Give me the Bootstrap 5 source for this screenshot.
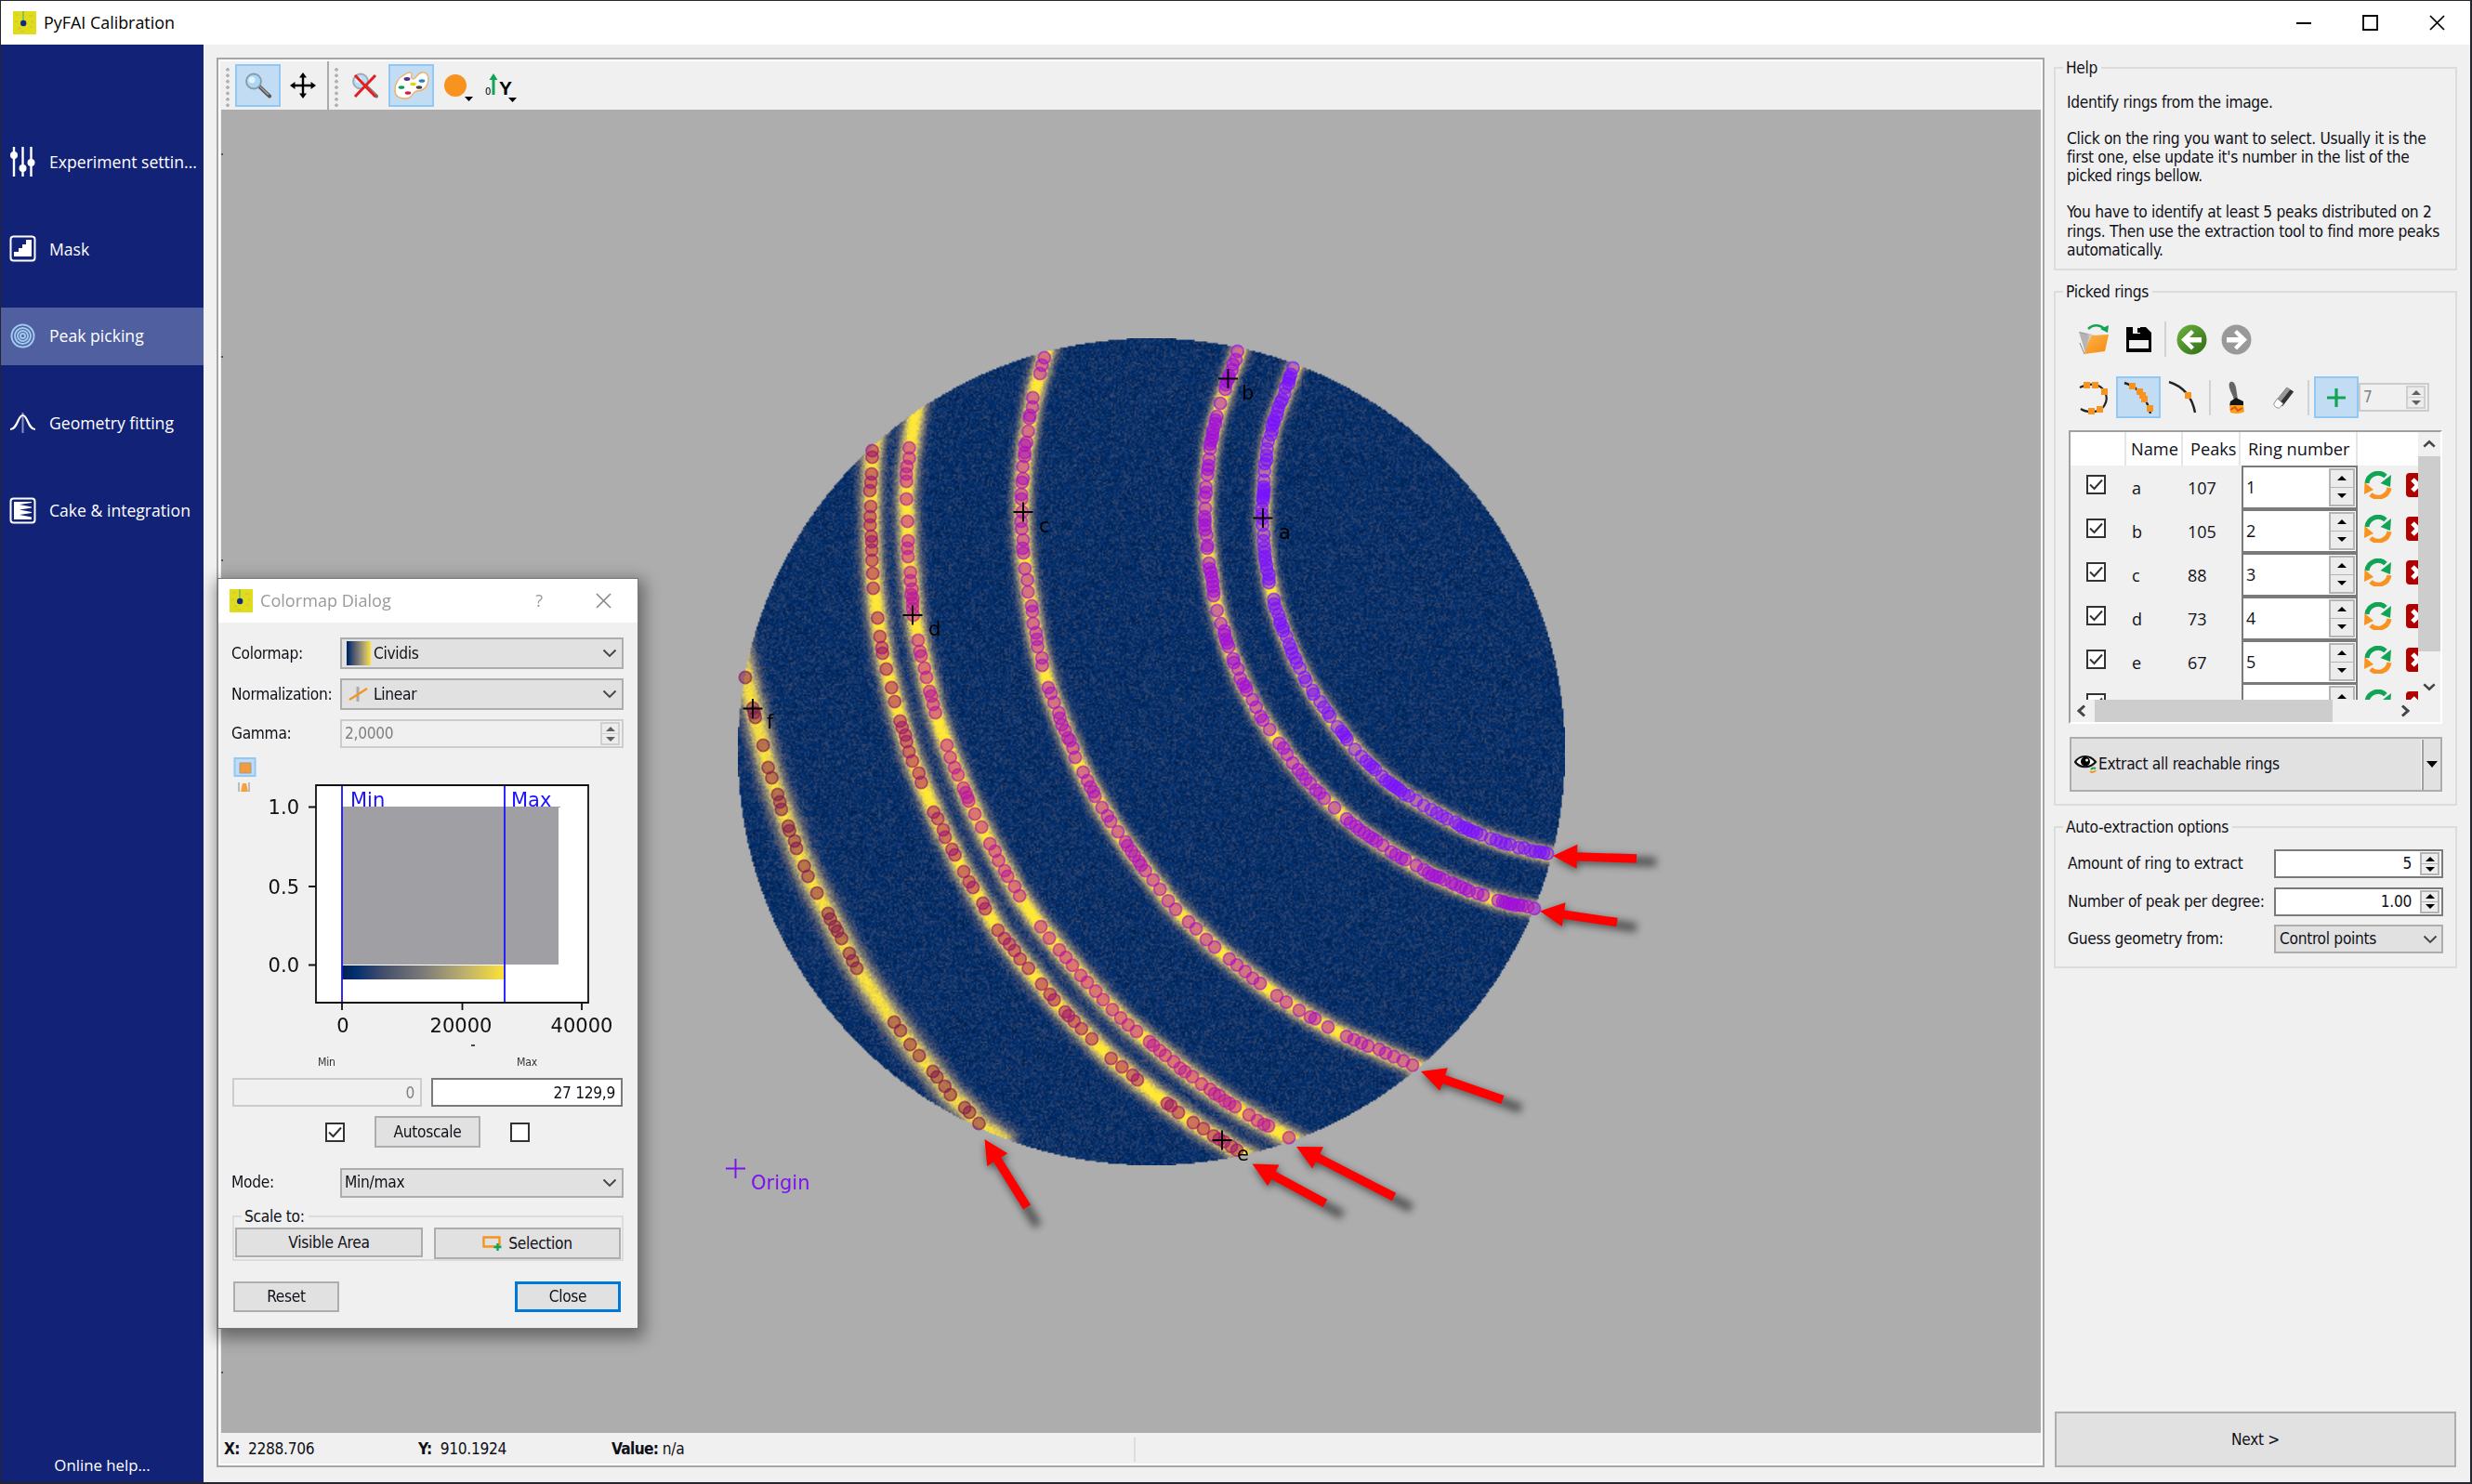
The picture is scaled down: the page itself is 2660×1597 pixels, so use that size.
<!DOCTYPE html>
<html lang="en">
<head>
<meta charset="utf-8">
<title>PyFAI Calibration</title>
<link href="https://cdn.jsdelivr.net/npm/bootstrap@5.3.0/dist/css/bootstrap.min.css" rel="stylesheet">
<style>
html,body{height:1597px;width:2660px;overflow:hidden}
body{font-family:"DejaVu Sans Condensed","DejaVu Sans","Noto Sans",sans-serif;font-stretch:condensed;font-size:17.2px;letter-spacing:-.3px;line-height:20.3px;color:#101018;background:#f0f0f0}
svg{display:block;flex:none}
.win{width:2660px;height:1597px;border:solid #24262c;border-width:1px 2px 2px 1px}
.segoe{font-family:"Open Sans","Noto Sans",sans-serif;font-stretch:normal;letter-spacing:0}
.titlebar{height:47px;background:#fff;padding-left:13px;padding-bottom:1px;font-size:17.9px;color:#000}
.titlebar .ctl{gap:55px;padding-right:27px}
.side{width:218px;background:#112277;color:#fff;font-size:17.6px;padding-top:95px}
.side a{height:62px;margin-bottom:31.8px;padding-left:9px;gap:14px;color:#fff;text-decoration:none;white-space:nowrap}
.side a.active{background:#4f5f9f}
.plotframe{width:1967px;height:1517px;margin:14px 0 0 14px;border:2px solid #a5a5a5;background:#f0f0f0;outline:2px solid #fff;outline-offset:-4px}
.toolstrip{height:54px;padding:5px 0 0 8px}
.tool{width:49px;height:46px;border:2px solid transparent;flex:none}
.tool.on,.ptool.on{background:#c1dcf3;border-color:#90c8f6}
.grip{width:5px;height:42px;background:radial-gradient(circle at 2px 2px,#b0b0b0 1.6px,transparent 2px) 0 0/5px 6.4px}
.vsep{width:2px;height:52px;margin-top:-3px;background:#ababab;flex:none}
.plot{margin-left:3px;width:1958px;height:1424px;background:#adadad;position:relative}
.plot canvas{position:absolute;left:556px;top:246px;width:890px;height:890px}
.plot svg{position:absolute;left:0;top:0}
.status{height:35px;padding-left:6px}
.status b{font-weight:700;letter-spacing:-.7px}
.status span{width:209px;flex:none}
.panel{width:434px;margin:24px 0 0 10px}
.gbox{border:2px solid #dcdcdc;position:relative;margin-bottom:22px}
.gbox>.cap{position:absolute;top:-11px;left:8px;padding:0 4px 0 3px;background:#f0f0f0}
.gbox p{margin:0 0 18.6px}
.ptool{width:48px;height:45px;border:2px solid transparent;flex:none}
.psep{width:2px;height:38px;background:#d2d2d2}
.field{border:2px solid #7a7a7a;background:#fff}
.field.off{border-color:#ccc;background:#f0f0f0;color:#808080}
.combo,.wbtn{border:2px solid #adadad;background:#e1e1e1;color:#101018}
.wbtn.main{border:3px solid #0078d7}
.updn{border:2px solid #b4b4b4;background:#ececec}
.updn i{display:flex;flex:1;align-items:center;justify-content:center;min-height:0}
.updn i+i{border-top:1.5px solid #b4b4b4}
.updn i:before{content:"";border:5px solid transparent;border-top:0;border-bottom:5px solid #000}
.updn i+i:before{border-bottom:0;border-top:5px solid #000}
.off .updn{border-color:#d0d0d0}.off .updn i+i{border-color:#d0d0d0}
.off .updn i:before{border-bottom-color:#606060}.off .updn i+i:before{border-top-color:#606060}
.chk{width:21px;height:21px;border:2px solid #333;background:#fff}
.tbl{width:402px;height:316px;border:2px solid #a0a0a0;border-right-color:#fff;border-bottom-color:#fff}
.tview{width:374px;height:288px;overflow:hidden}
.thead{height:36px;background:#fff;font-size:18.2px}
.thead>div{border-right:2px solid #e5e5e5;flex:none}
.trow{height:46.9px;font-size:18px}
.trow>div{flex:none}
.c0{width:60px;padding-left:16px}.c1{width:61px}.c2{width:62px}.c3{width:125px}
.trow .c1{padding-left:6px}.trow .c2{padding-left:5px}
.vbar{width:24px;height:288px}.hbar{height:24px}
.dlg{position:absolute;left:234px;top:622px;width:453px;height:808px;background:#f0f0f0;border:1.5px solid #777;box-shadow:2px 6px 16px 4px rgba(0,0,0,.4)}
.dlg .dtitle{height:47px;background:#fff;color:#999;font-size:18.1px;padding:0 0 1px 12px}
.frow{padding-left:14px}
.frow>span{width:117px;flex:none}
.tiny{font-size:12.2px;letter-spacing:-.2px;line-height:16px;color:#333}
.dj{font-family:"DejaVu Sans",sans-serif;font-stretch:normal;letter-spacing:0}
</style>
<script src="https://cdn.jsdelivr.net/npm/bootstrap@5.3.0/dist/js/bootstrap.bundle.min.js"></script>
</head>
<body>
<svg width="0" height="0" class="position-absolute">
 <defs>
  <linearGradient id="civ"><stop offset="0" stop-color="#00204d"/><stop offset=".08" stop-color="#002f6f"/><stop offset=".25" stop-color="#434e6c"/><stop offset=".5" stop-color="#7c7b78"/><stop offset=".75" stop-color="#bcaf6f"/><stop offset="1" stop-color="#ffe236"/></linearGradient>
  <linearGradient id="fold" x1="0" y1="0" x2="1" y2="1"><stop offset="0" stop-color="#ffb44d"/><stop offset="1" stop-color="#f28a10"/></linearGradient>
  <linearGradient id="steel" x1="0" y1="0" x2="1" y2="1"><stop offset="0" stop-color="#777"/><stop offset=".5" stop-color="#e4e4e4"/><stop offset="1" stop-color="#777"/></linearGradient>
  <linearGradient id="grn" x1="0" y1="0" x2="1" y2="1"><stop offset="0" stop-color="#6db33f"/><stop offset="1" stop-color="#2f6d14"/></linearGradient>
  <filter id="soft" x="-50%" y="-150%" width="200%" height="400%"><feGaussianBlur stdDeviation="4"/></filter>
  <symbol id="logo" viewBox="0 0 25 25"><rect width="25" height="25" fill="#e0dc1c"/><path d="M3 3h3v2H3zM17 4h4v2h-4zM5 17h3v3H5zM18 16h3v2h-3zM8 21h4v2H8zM2 10h3v2H2zM20 10h2v3h-2z" fill="#cfd030"/><path d="M11 0v13" stroke="#6cc06c" stroke-width="1.6"/><circle cx="11.2" cy="13" r="3.2" fill="#102a80"/></symbol>
  <symbol id="lens" viewBox="0 0 30 28"><path d="M15.500 14.500L27 25.500" stroke="#555" stroke-width="4" stroke-linecap="round"/><path d="M17 15.500L26 24" stroke="#aaa" stroke-width="1.300"/><circle cx="10" cy="9.500" r="8" fill="#a9d8f5" stroke="#8a9aa8" stroke-width="1.800"/><circle cx="8" cy="8" r="3.500" fill="#e2f4ff"/></symbol>
  <symbol id="tick" viewBox="0 0 17 17"><path d="M2 8.500l4.500 4.500L15 3.500" fill="none" stroke="#333" stroke-width="2"/></symbol>
  <symbol id="chev" viewBox="0 0 16 10"><path d="M1.500 1.500L8 8l6.500-6.500" fill="none" stroke="#444" stroke-width="1.900"/></symbol>
  <symbol id="reload" viewBox="0 0 30 30"><path d="M3 13A12 12 0 0 1 23 5.500" fill="none" stroke="#12a455" stroke-width="5"/><path d="M29 4l-1 13-10.500-4z" fill="#12a455"/><path d="M27 18A12 12 0 0 1 7 25" fill="none" stroke="#f7931e" stroke-width="5"/><path d="M0.500 12l-0.500 13 10-5z" fill="#f7931e"/></symbol>
  <symbol id="del" viewBox="0 0 26 26"><rect width="26" height="26" rx="4" fill="#b00000"/><path d="M7 7l12 12M19 7L7 19" stroke="#fff" stroke-width="5"/></symbol>
 </defs>
</svg>

<div class="win d-flex flex-column">
 <header class="titlebar segoe d-flex align-items-center">
  <svg width="25" height="25" class="me-2"><use href="#logo"/></svg><span>PyFAI Calibration</span>
  <div class="ctl d-flex align-items-center ms-auto">
   <svg width="16" height="16"><path d="M0 9h16" stroke="#000" stroke-width="2"/></svg>
   <svg width="17" height="17"><path d="M1 1h15v15H1z" fill="none" stroke="#000" stroke-width="1.800"/></svg>
   <svg width="17" height="17"><path d="M1 1l15 15M16 1L1 16" stroke="#000" stroke-width="1.700"/></svg>
  </div>
 </header>
 <main class="d-flex flex-grow-1">
  <nav class="side segoe d-flex flex-column">
   <a class="d-flex align-items-center"><svg width="29" height="34"><path d="M5 1v32M14.500 1v32M23.500 1v32" stroke="#fff" stroke-width="2.400"/><circle cx="5" cy="10" r="4" fill="#fff"/><circle cx="14.500" cy="24" r="4" fill="#fff"/><circle cx="23.500" cy="18" r="4" fill="#fff"/></svg>Experiment settin...</a>
   <a class="d-flex align-items-center"><svg width="29" height="29"><rect x="1.500" y="1.500" width="26" height="26" rx="3" fill="none" stroke="#fff" stroke-width="2"/><path d="M5 23v-5h5v-4h4v-4h4V5h6v18z" fill="#fff"/></svg>Mask</a>
   <a class="active d-flex align-items-center"><svg width="29" height="29" fill="none" stroke="#9fcbee" stroke-width="2"><circle cx="14.500" cy="14.500" r="12"/><circle cx="14.500" cy="14.500" r="8.500"/><circle cx="14.500" cy="14.500" r="5.500"/><circle cx="14.500" cy="14.500" r="2.500"/></svg>Peak picking</a>
   <a class="d-flex align-items-center"><svg width="29" height="24" fill="none" stroke="#fff"><path d="M14.500 1v22" stroke-width="2" opacity=".5"/><path d="M1 19C9 19 9 4 14.500 4S20 19 28 19" stroke-width="2.200"/></svg>Geometry fitting</a>
   <a class="d-flex align-items-center"><svg width="29" height="29"><rect x="1.500" y="1.500" width="26" height="26" rx="3" fill="none" stroke="#fff" stroke-width="2"/><path d="M5 5h19v1l-13 2 13 2.500v1l-13 2 13 2.500v1l-13 2 13 2.500V24H5z" fill="#fff"/></svg>Cake &amp; integration</a>
   <div class="mt-auto text-center" style="font-size:16.800px;padding-bottom:8px">Online help...</div>
  </nav>

  <section class="plotframe">
   <div class="toolstrip d-flex align-items-start">
    <div class="grip mt-1"></div>
    <div class="tool on d-flex align-items-center justify-content-center" style="margin-left:5px"><svg width="30" height="28"><use href="#lens"/></svg></div>
    <div class="tool d-flex align-items-center justify-content-center" style="margin-left:-1px;margin-right:2px"><svg width="28" height="28" viewBox="0 0 28 28"><path d="M14 4v20M4 14h20" stroke="#000" stroke-width="2.400"/><path d="M14 0l4 5.500h-8zM14 28l4-5.500h-8zM0 14l5.500-4v8zM28 14l-5.500-4v8z"/></svg></div>
    <div class="vsep"></div>
    <div class="grip mt-1" style="margin:0 4px 0 6px"></div>
    <div class="tool d-flex align-items-center justify-content-center"><svg width="32" height="28"><use href="#lens" opacity=".8" width="30" height="28"/><path d="M4 3l22 23M26 3L4 26" stroke="#e41e1e" stroke-width="3"/></svg></div>
    <div class="tool on d-flex align-items-center justify-content-center"><svg width="38" height="32" viewBox="0 0 38 32"><path d="M12 4c3-2 7-3 7 0 0 2-2 4 1 5 4 1 4-6 10-7s8 5 6 12-7 8-12 8c-5 1-3 8-12 8C5 30 1 27 1 21 1 13 6 7 12 4z" fill="#fff" stroke="#f0b060" stroke-width="1.300"/><ellipse cx="14" cy="9" rx="3.400" ry="1.900" fill="#5a2a90"/><ellipse cx="30" cy="11" rx="3.400" ry="1.800" fill="#1f7fd0"/><ellipse cx="20.500" cy="14.500" rx="3.200" ry="1.800" fill="#e5d500"/><ellipse cx="8" cy="18" rx="3.300" ry="1.800" fill="#109a50"/><ellipse cx="27" cy="18" rx="3.300" ry="1.800" fill="#444"/><ellipse cx="15" cy="24" rx="3.300" ry="1.800" fill="#c8205a"/></svg></div>
    <div class="tool d-flex align-items-center justify-content-center"><svg width="36" height="36"><circle cx="16" cy="18" r="12" fill="#f7931e"/><path d="M26 30h9l-4.500 5z"/></svg></div>
    <svg width="36" height="46" style="margin-left:4px"><path d="M11 33V13" stroke="#12a455" stroke-width="3"/><path d="M11 10l4.500 7h-9z" fill="#12a455"/><text x="2" y="33" font-size="10" class="dj">0</text><text x="17" y="33" font-size="21" font-weight="bold" font-family="Liberation Sans, sans-serif">Y</text><path d="M27 36h9l-4.500 5z"/></svg>
   </div>
   <div class="plot">
    <canvas id="img" width="534" height="534"></canvas>
    <svg id="ov" width="1958" height="1424" viewBox="238 119 1958 1424"></svg>
   </div>
   <div class="status d-flex align-items-center">
    <span><b>X:</b>&nbsp; 2288.706</span><span style="width:208px"><b>Y:</b>&nbsp; 910.1924</span><span><b>Value:</b> n/a</span>
    <div style="width:2px;height:26px;background:#dcdcdc;margin-left:353px"></div>
   </div>
  </section>

  <aside class="panel d-flex flex-column">
   <div class="gbox" style="height:219px;padding:26px 0 0 12px"><span class="cap">Help</span>
    <p>Identify rings from the image.</p>
    <p>Click on the ring you want to select. Usually it is the<br>first one, else update it's number in the list of the<br>picked rings bellow.</p>
    <p>You have to identify at least 5 peaks distributed on 2<br>rings. Then use the extraction tool to find more peaks<br>automatically.</p>
   </div>
   <div class="gbox" style="height:554px;padding:28px 0 0 14px"><span class="cap">Picked rings</span>
    <div class="d-flex align-items-center" style="height:44px;padding-left:10px">
     <svg width="34" height="34" viewBox="0 0 34 34"><path d="M1 9l15 3 6 2-9 18z" fill="url(#steel)"/><path d="M1 9l11 5-4 18z" fill="#b5b5b5"/><path d="M11 20l4-7 18-1-4 18-22 3z" fill="url(#fold)"/><path d="M7 33l-5-12" stroke="#888"/><path d="M11 6C17 0 25 2 28 6" fill="none" stroke="#12a455" stroke-width="2.600"/><path d="M33 2l-1 8-8-4z" fill="#12a455"/></svg>
     <svg width="27" height="28" viewBox="0 0 27 28" style="margin-left:18px"><path d="M0 1h21l6 6v21H0z"/><path d="M7 1h8v7H7zM3 15h21v9H3z" fill="#f0f0f0"/><path d="M12 2h3v5h-3z"/></svg>
     <div class="psep" style="margin-left:14px"></div>
     <svg width="33" height="33" viewBox="0 0 33 33" style="margin-left:11px"><circle cx="16.500" cy="16.500" r="16" fill="url(#grn)"/><path d="M5 16.500L16 6l3 3-5 5h13v5.500H14l5 5-3 3z" fill="#fff"/></svg>
     <svg width="33" height="33" viewBox="0 0 33 33" style="margin-left:15px"><circle cx="16.500" cy="16.500" r="16" fill="#999"/><path d="M28 16.500L17 6l-3 3 5 5H6v5.500h13l-5 5 3 3z" fill="#fff"/></svg>
    </div>
    <div class="d-flex align-items-center" style="height:45px;margin-top:18px">
     <div class="ptool d-flex align-items-center justify-content-center" style="margin-left:3px"><svg width="34" height="36" viewBox="0 0 34 36"><path d="M2 7C12 2 24 2 29 12c5 10-2 22-15 21-5 0-8-1-11-3" fill="none" stroke="#222" stroke-width="2.200"/><path d="M6 1h7v7H6zM15 1h7v7h-7zM25 8h7v7h-7zM20 27h7v7h-7zM11 29h7v7h-7z" fill="#f7931e"/></svg></div>
     <div class="ptool on d-flex align-items-center justify-content-center"><svg width="34" height="36" viewBox="0 0 34 36"><path d="M2 2c16 5 24 16 28 33" fill="none" stroke="#222" stroke-width="2.400"/><path d="M7 2h7v7H7zM15 8h7v7h-7zM18 12h7v7h-7zM20 16h7v7h-7zM26 26h7v7h-7z" fill="#f7931e"/></svg></div>
     <div class="ptool d-flex align-items-center justify-content-center"><svg width="32" height="36" viewBox="0 0 32 36"><path d="M1 1c16 5 25 17 28 33" fill="none" stroke="#222" stroke-width="2.400"/><path d="M18 12h7v7h-7z" fill="#f7931e"/></svg></div>
     <div class="psep" style="margin-left:4px"></div>
     <div class="ptool d-flex align-items-center justify-content-center" style="margin-left:4px"><svg width="22" height="36" viewBox="0 0 22 36"><path d="M3 2c3-3 6 0 7 5l2 13-4 1C7 14 1 8 3 2z" fill="#666"/><path d="M4 22l6-4 8 4v5H3z" fill="#151515"/><path d="M3 26h15l1 7c-5 3-11 2-15 1z" fill="#f7a21e"/><path d="M4 31l5-3 3 4 5-3" stroke="#e84a10" stroke-width="2" fill="none"/></svg></div>
     <div class="ptool d-flex align-items-center justify-content-center" style="margin-left:2px"><svg width="26" height="26" viewBox="0 0 28 28"><path d="M18 2l8 5-13 17-8-6z" fill="#333"/><path d="M18 2l4 2.500L9 21l-4-3z" fill="#999"/><path d="M7 15l7 6-5 5c-3 0-6-2-6-5z" fill="#fff" stroke="#888"/></svg></div>
     <div class="psep" style="margin-left:2px"></div>
     <div class="ptool on d-flex align-items-center justify-content-center" style="margin-left:5px"><svg width="20" height="20"><path d="M10 0v20M0 10h20" stroke="#12a455" stroke-width="3.200"/></svg></div>
     <div class="field off d-flex align-items-center" style="width:76px;height:31px;padding:0 2px 0 3px">7<div class="updn d-flex flex-column ms-auto" style="width:21px;height:25px"><i></i><i></i></div></div>
    </div>
    <div class="tbl" style="margin-top:13px">
     <div class="d-flex">
      <div class="tview">
       <div class="thead d-flex align-items-center segoe"><div style="width:60px;height:36px"></div><div class="d-flex align-items-center" style="width:61px;height:36px;padding-left:5px">Name</div><div class="d-flex align-items-center" style="width:62px;height:36px;padding-left:8px">Peaks</div><div class="d-flex align-items-center" style="width:126px;height:36px;padding-left:8px">Ring number</div></div>
       <div id="rows"></div>
      </div>
      <div class="vbar d-flex flex-column align-items-center"><svg width="14" height="10" style="margin:8px 0 8px" viewBox="0 0 16 10"><path d="M1.500 8L8 2l6.500 6" fill="none" stroke="#444" stroke-width="3"/></svg><div style="width:24px;height:210px;background:#cdcdcd"></div><svg width="14" height="10" style="margin-top:33px" viewBox="0 0 16 10"><path d="M1.500 2L8 8l6.500-6" fill="none" stroke="#444" stroke-width="3"/></svg></div>
     </div>
     <div class="hbar d-flex align-items-center"><svg width="10" height="14" viewBox="0 0 10 14" style="margin:0 9px 0 7px"><path d="M8 1.500L2 7l6 5.500" fill="none" stroke="#444" stroke-width="3"/></svg><div style="width:256px;height:24px;background:#cdcdcd"></div><svg width="10" height="14" viewBox="0 0 10 14" style="margin-left:73px"><path d="M2 1.500L8 7l-6 5.500" fill="none" stroke="#444" stroke-width="3"/></svg></div>
    </div>
    <div class="wbtn d-flex align-items-center" style="width:401px;height:59px;margin:14px 0 0 1px;padding-left:3px">
     <svg width="25" height="22" viewBox="0 0 25 22"><path d="M1 8C6 0 17 0 23 8 17 15 6 15 1 8z" fill="#fff" stroke="#111" stroke-width="2.200"/><circle cx="12" cy="7.500" r="5"/><circle cx="13.500" cy="6" r="1.500" fill="#fff"/><path d="M18 16a4 4 0 0 1 5-1" stroke="#12a455" stroke-width="2" fill="none"/><path d="M23 17a4 4 0 0 1-6 1" stroke="#f7931e" stroke-width="2" fill="none"/></svg>
     <span style="margin-left:1px">Extract all reachable rings</span>
     <div class="ms-auto" style="width:3px;height:54px;border-left:1px solid #fff;border-right:2px solid #a0a0a0"></div><svg width="12" height="7" style="margin:0 3px 0 3px"><path d="M0 0h12L6 7z"/></svg>
    </div>
   </div>
   <div class="gbox" style="height:153px;padding:23px 0 0 13px"><span class="cap">Auto-extraction options</span>
    <div class="d-flex align-items-center" style="height:31px;margin-bottom:9.500px"><span style="width:222px">Amount of ring to extract</span><div class="field d-flex align-items-center justify-content-end" style="width:182px;height:31px;padding-right:2px">5<div class="updn d-flex flex-column" style="width:21px;height:25px;margin-left:9px"><i></i><i></i></div></div></div>
    <div class="d-flex align-items-center" style="height:31px;margin-bottom:9.500px"><span style="width:222px">Number of peak per degree:</span><div class="field d-flex align-items-center justify-content-end" style="width:182px;height:31px;padding-right:2px">1.00<div class="updn d-flex flex-column" style="width:21px;height:25px;margin-left:9px"><i></i><i></i></div></div></div>
    <div class="d-flex align-items-center" style="height:31px"><span style="width:222px">Guess geometry from:</span><div class="combo d-flex align-items-center justify-content-between" style="width:182px;height:31px;padding:0 4px">Control points<svg width="16" height="10"><use href="#chev"/></svg></div></div>
   </div>
   <div class="wbtn d-flex align-items-center justify-content-center mt-auto" style="width:432px;height:60px;margin:0 0 16px 1px">Next &gt;</div>
  </aside>
 </main>
</div>

<div class="dlg">
 <div class="dtitle segoe d-flex align-items-center"><svg width="25" height="25" style="margin-right:8px"><use href="#logo"/></svg>Colormap Dialog<span class="ms-auto" style="margin-right:57px">?</span><svg width="17" height="17" style="margin-right:28px"><path d="M1 1l15 15M16 1L1 16" stroke="#888" stroke-width="1.600"/></svg></div>
 <div class="frow d-flex align-items-center" style="margin-top:16px;height:34px"><span>Colormap:</span><div class="combo d-flex align-items-center" style="width:305px;height:34px;padding:0 5px"><svg width="26" height="26" style="margin-right:3px"><rect width="26" height="26" fill="url(#civ)"/></svg>Cividis<svg width="16" height="10" class="ms-auto"><use href="#chev"/></svg></div></div>
 <div class="frow d-flex align-items-center" style="margin-top:10px;height:34px"><span>Normalization:</span><div class="combo d-flex align-items-center" style="width:305px;height:34px;padding:0 5px"><svg width="25" height="26" style="margin-right:4px"><path d="M12 5v16" stroke="#aaa" stroke-width="3"/><path d="M3 19L22 7" stroke="#f7931e" stroke-width="2.400"/></svg>Linear<svg width="16" height="10" class="ms-auto"><use href="#chev"/></svg></div></div>
 <div class="frow d-flex align-items-center" style="margin-top:10px;height:31px"><span>Gamma:</span><div class="field off d-flex align-items-center justify-content-between" style="width:305px;height:31px;padding:0 2px 0 3px">2,0000<div class="updn d-flex flex-column" style="width:21px;height:25px"><i></i><i></i></div></div></div>
 <svg width="450" height="325" viewBox="235 806 450 325" class="dj" font-size="21">
  <rect x="252.500" y="817" width="22" height="19" fill="#c1dcf3" stroke="#90c8f6" stroke-width="2"/><path d="M258 822h12v11h-12z" fill="#f39a3c" stroke="#9a9a9a"/>
  <path d="M257 843v10M268 843v10" stroke="#aaa" stroke-width="1.500"/><path d="M259 853l2-9h4l2 9z" fill="#f7a040"/>
  <rect x="340" y="846" width="293" height="234" fill="#fff"/>
  <g fill="#1a12ff"><text x="377" y="868.500">Min</text><text x="550" y="868.500">Max</text></g>
  <path d="M368 869h235v1h-2v169H368z" fill="#a09fa3"/>
  <rect x="368" y="1040" width="175" height="15" fill="url(#civ)"/>
  <path d="M368 846v234M543 846v234" stroke="#1a12ff" stroke-width="1.800"/>
  <path d="M340 846h293v234H340zM332 869.500h8M332 955h8M332 1039.500h8M368 1081v7M497.500 1081v7M626 1081v7" fill="none" stroke="#111" stroke-width="1.800"/>
  <g text-anchor="end" fill="#111"><text x="322" y="877">1.0</text><text x="322" y="962.500">0.5</text><text x="322" y="1047">0.0</text></g>
  <g text-anchor="middle" fill="#111"><text x="369" y="1112">0</text><text x="496" y="1112">20000</text><text x="626" y="1112">40000</text></g>
  <path d="M507 1126h4" stroke="#111" stroke-width="1.500"/>
 </svg>
 <div class="tiny d-flex" style="margin-top:5px;padding-left:107px"><span style="width:214px">Min</span><span>Max</span></div>
 <div class="d-flex" style="padding-left:15px;margin-top:9px"><div class="field off text-end" style="width:204px;height:31px;padding:4px 6px 0">0</div><div class="field text-end" style="width:206px;height:31px;padding:4px 6px 0;margin-left:10px">27 129,9</div></div>
 <div class="d-flex align-items-center" style="padding-left:115px;height:34px;margin-top:10px"><div class="chk"><svg width="17" height="17"><use href="#tick"/></svg></div><div class="wbtn d-flex align-items-center justify-content-center" style="width:114px;height:34px;margin:0 32px">Autoscale</div><div class="chk"></div></div>
 <div class="frow d-flex align-items-center" style="margin-top:22px;height:31px"><span>Mode:</span><div class="combo d-flex align-items-center justify-content-between" style="width:305px;height:32px;padding:0 5px 0 3px">Min/max<svg width="16" height="10"><use href="#chev"/></svg></div></div>
 <div class="gbox d-flex" style="margin:20px 15px 0 15px;height:49px;padding:11px 1px 0"><span class="cap">Scale to:</span><div class="wbtn d-flex align-items-center justify-content-center" style="width:202px;height:32px">Visible Area</div><div class="wbtn d-flex align-items-center justify-content-center" style="width:201px;height:34px;margin-left:12px"><svg width="21" height="16" style="margin-right:7px"><path d="M1.500 1.500h17v10h-17z" fill="none" stroke="#f7931e" stroke-width="2.400"/><path d="M16.500 8v8M12.500 12h8" stroke="#12a455" stroke-width="2.400"/></svg>Selection</div></div>
 <div class="d-flex justify-content-between" style="padding:22px 18px 0 16px"><div class="wbtn d-flex align-items-center justify-content-center" style="width:114px;height:33px">Reset</div><div class="wbtn main d-flex align-items-center justify-content-center" style="width:114px;height:33px">Close</div></div>
</div>

<script>
document.getElementById('rows').innerHTML=[['a',107,1],['b',105,2],['c',88,3],['d',73,4],['e',67,5],['','','']].map(r=>
`<div class="trow d-flex align-items-center segoe"><div class="c0"><div class="chk" style="margin:-5px 0 0 1px"><svg width="17" height="17"><use href="#tick"/></svg></div></div><div class="c1" style="padding-top:2px">${r[0]}</div><div class="c2" style="padding-top:2px">${r[1]}</div><div class="c3 field d-flex align-items-center" style="height:47px;margin-left:1px;padding:0 1px 0 3px">${r[2]}<div class="updn d-flex flex-column ms-auto" style="width:28px;height:41px"><i></i><i></i></div></div><svg width="30" height="30" style="margin:-4px 15px 0 7px"><use href="#reload"/></svg><svg width="26" height="26" style="margin-top:-4px"><use href="#del"/></svg></div>`).join('');

// Each ring: crest height and profile width, marker colour, crest path, peaks listed by y (steep part) and by x (flat part)
const rings=[
{a:1.12,s:5.9,c:'#7610ff',p:[[1408,362],[1392,397],[1386,412],[1377,436],[1368,463],[1362,495],[1359,533],[1358.5,558],[1359.5,583],[1362,604],[1366,628],[1370,647],[1379,675],[1388,698],[1398,720],[1412,745],[1429,770],[1444,790],[1458,807],[1476,826],[1504,850],[1542,873],[1579,893],[1615,907],[1640,914],[1663,919.5],[1700,927]],
 y:[397,404,407,410,414,418,425,431,434,439,444,449,453,456,459,464,469,476,484,491,496,500,508,518,525,528,531,534,537,540,548,554,559,566,576,583,590,595,600,604,609,614,619,624,628,646,651,656,662,668,672,676,680,686,694,699,704,709,714,720,730,734,744,748,756,762,768,772,783,788,791,794,797],
 x:[1458,1465,1470,1474,1477,1480,1487,1491,1495,1498,1501,1504,1507,1511,1516,1524,1532,1540,1546,1552,1557,1566,1570,1574,1578,1581,1585,1589,1594,1604,1610,1615,1620,1625,1634,1640,1647,1652,1657,1661,1665]},
{a:1.12,s:6.1,c:'#9c0cdc',p:[[1340,352],[1332,379],[1322,408],[1313,435],[1305,465],[1299,505],[1296.5,547],[1297.5,575],[1301,608],[1306,640],[1310,658],[1320,693],[1329,717],[1339,740],[1357,773],[1377,802],[1401,834],[1436,870],[1472,900],[1524,933],[1563,952],[1597,965],[1626,973.5],[1651,978.5],[1690,986]],
 y:[379,388,393,399,405,408,411,415,420,435,449,453,457,463,467,471,475,479,484,495,502,506,512,525,531,536,548,557,561,566,571,577,588,591,607,613,617,622,627,632,637,642,658,672,680,684,689,693,697,710,714,721,731,737,740,744,754,762,772,776,786,801,806],
 x:[1385,1391,1397,1401,1405,1410,1416,1420,1425,1436,1449,1453,1459,1463,1468,1473,1477,1481,1488,1497,1502,1508,1512,1524,1532,1537,1541,1545,1549,1554,1562,1566,1572,1577,1581,1590,1596,1612,1617,1620,1624,1627,1630,1634,1638,1644,1651]},
{a:1.12,s:6.7,c:'#aa10bc',p:[[1133,352],[1122.5,386],[1118,403],[1111.5,429],[1106,463],[1102,490],[1099.5,525],[1099,560],[1101,595],[1104.5,625],[1109,655],[1113.5,683],[1121,714],[1128.5,742],[1138,768],[1148,793],[1157.5,816],[1165,832],[1177,855],[1193,882],[1212,910],[1232,937],[1248,958],[1265,979],[1281,995],[1307,1020],[1323,1033],[1347,1052],[1374,1072],[1397,1087],[1429,1106],[1458,1120],[1484,1131],[1520,1147],[1560,1163]],
 y:[386,394,403,429,439,448,451,465,477,480,488,492,503,516,520,533,538,552,562,570,582,591,596,613,625,638,653,659,672,682,689,697,709,717,741,747,757,768,774,781,787,795,798,806,816,832,841,848,853,858,870,879,885,896,907,911,917,922,928,932,938,948,958],
 x:[1257,1265,1279,1287,1298,1307,1323,1331,1340,1348,1356,1374,1384,1398,1410,1415,1429,1449,1457,1465,1472,1484,1491,1500,1510,1520]},
{a:1.08,s:7.3,c:'#b8149c',p:[[990,410],[984,445],[979,480],[976,508],[974.5,538],[975.5,565],[977,600],[979,620],[981,643],[983,663],[988,690],[994,719],[1001,749],[1006,768],[1018,803],[1023,816],[1037,850],[1049,877],[1065,909],[1081,938],[1096,964],[1120,998],[1147,1031],[1170,1058],[1197,1087],[1223,1111],[1240,1125],[1263,1144],[1283,1160],[1311,1180],[1329,1192],[1351,1205],[1387,1225],[1420,1242]],
 y:[483,494,503,511,519,538,562,583,591,600,617,626,635,641,645,650,656,663,690,702,707,720,730,745,750,759,768,803,816,827,835,849,854,859,863,877,891,909,917,927,938,944,955,965],
 x:[1120,1129,1140,1147,1154,1163,1170,1179,1187,1197,1206,1214,1223,1237,1241,1248,1254,1263,1270,1275,1283,1293,1302,1307,1312,1318,1323,1329,1344,1353,1360,1365,1387]},
{a:1.06,s:7.4,c:'#9c1070',p:[[947,440],[939,480],[937,510],[936.5,545],[937,575],[937.5,600],[940,633],[944,666],[949,698],[954,721],[961,750],[970,782],[978,808],[982,820],[992,844],[1005,875],[1016,899],[1026,918],[1035,937],[1046,955],[1060,979],[1074,1002],[1092,1026],[1106,1043],[1120,1060],[1133,1076],[1148,1092],[1173,1118],[1196,1140],[1222,1162],[1258,1190],[1284,1209],[1311,1226],[1330,1238],[1365,1258]],
 y:[486,493,511,520,529,546,557,566,578,584,593,604,618,634,666,686,698,704,721,741,756,777,784,792,799,810,820,833,843,875,882,894,902,915,921,939,950,956,973,979,1002,1011,1017,1024,1033,1043,1060,1071,1077,1090,1094,1100,1108,1119,1140,1149,1158,1163],
 x:[1256,1260,1268,1284,1295,1306,1312,1317,1325,1331]},
{a:.92,s:8.8,c:'#801650',p:[[786,650],[795,700],[802,730],[810,763],[812.5,773],[820,803],[826,827],[836,857],[848,890],[857,914],[866,936],[879,962],[890,983],[903,1008],[914,1029],[923,1044],[940,1070],[962,1101],[980,1126],[1003,1154],[1023,1179],[1042,1197],[1053,1210],[1078,1228]],
 y:[730,763,768,773,803,827,838,856,864,872,890,895,906,914,933,944,962,984,990,998,1003,1011,1027,1035,1043,1101,1110,1125,1137,1154,1160,1170,1179,1193,1198,1210],x:[]}];

// Catmull-Rom curve through the crest points
function spline(p){
 const o=[];
 for(let i=0;i<p.length-1;i++){
  const a=p[i-1]||p[i],b=p[i],c=p[i+1],d=p[i+2]||c;
  for(let k=0;k<40;k++){
   const t=k/40,f=j=>.5*(2*b[j]+(c[j]-a[j])*t+(2*a[j]-5*b[j]+4*c[j]-d[j])*t*t+(3*b[j]-a[j]-3*c[j]+d[j])*t*t*t);
   o.push([f(0),f(1)]);
  }
 }
 return o;
}
let seed=7;
const rnd=()=>(seed=(Math.imul(seed,1664525)+1013904223)>>>0)/4294967296;
const N=534,S=890/N,sum=new Float32Array(N*N);
for(const r of rings){
 r.line=spline(r.p);
 const D=new Float32Array(N*N).fill(1e6),R=Math.ceil(r.s*3.2/S);
 for(const q of r.line){
  const cx=(q[0]-794)/S,cy=(q[1]-365)/S;
  for(let y=Math.max(0,Math.floor(cy-R));y<Math.min(N,cy+R);y++)
   for(let x=Math.max(0,Math.floor(cx-R));x<Math.min(N,cx+R);x++){
    const d=((x-cx)**2+(y-cy)**2)*S*S;
    if(d<D[y*N+x])D[y*N+x]=d;
   }
 }
 const cut=(r.s*3.2)**2;
 for(let i=0;i<N*N;i++)if(D[i]<cut)sum[i]+=r.a*Math.exp(-D[i]/(2*r.s*r.s));
}
// cividis colour scale
const civ=[[0,32,77],[0,42,102],[0,48,111],[31,59,110],[57,72,108],[87,93,109],[112,113,115],[138,134,120],[165,156,116],[195,179,105],[225,204,85],[255,232,55]];
const pos=[0,.05,.09,.14,.2,.3,.4,.5,.6,.7,.82,1];
function color(v){
 v=v<0?0:v>1?1:v;
 let i=1;
 while(pos[i]<v)i++;
 const t=(v-pos[i-1])/(pos[i]-pos[i-1]);
 return civ[i].map((c,j)=>civ[i-1][j]+(c-civ[i-1][j])*t);
}
const ctx=document.getElementById('img').getContext('2d'),im=ctx.createImageData(N,N);
for(let y=0;y<N;y++)for(let x=0;x<N;x++){
 const i=y*N+x;
 if((x-266.5)**2+(y-266.5)**2>267*267)continue;
 const g=(rnd()+rnd())/2-.5,v=sum[i],c=color(.092+.95*v+g*(.27+.08*Math.min(1,v)));
 im.data.set([c[0],c[1],c[2],255],i*4);
}
ctx.putImageData(im,0,0);

let h='';
function at(l,k,v){
 for(let i=1;i<l.length;i++)if(l[i-1][k]<=v&&l[i][k]>=v&&(k===1||i>l.length/2))return l[i];
 return l[0];
}
for(const r of rings){
 h+=`<g fill="${r.c}" fill-opacity=".53" stroke="${r.c}" stroke-opacity=".6" stroke-width="1.8">`;
 for(const y of r.y){const q=at(r.line,1,y);h+=`<circle cx="${(q[0]+rnd()*2-.6).toFixed(1)}" cy="${y}" r="6.6"/>`}
 for(const x of r.x){const q=at(r.line,0,x);h+=`<circle cx="${x}" cy="${(q[1]+rnd()*1.6-.8).toFixed(1)}" r="6.6"/>`}
 h+='</g>';
}
const mark=(x,y,t,lx,ly,c)=>`<path d="M${x-10.5} ${y}h21M${x} ${y-10.5}v21" stroke="${c}" stroke-width="1.9"/><text x="${lx}" y="${ly}" fill="${c}" font-size="21" class="dj">${t}</text>`;
h+=mark(1359,558.5,'a',1376,581,'#000')+mark(1321.5,408.5,'b',1336,431,'#000')+mark(1101,552,'c',1118,574,'#000')+mark(982,663,'d',999,685,'#000')+mark(1315,1228,'e',1331,1250,'#000')+mark(810,763.5,'f',825,785,'#000')+mark(791.5,1258.5,'Origin',808,1280.5,'#7a12ee');
function arrow(x1,y1,x2,y2){
 const L=Math.hypot(x2-x1,y2-y1),a=Math.atan2(y2-y1,x2-x1)*180/Math.PI,d=l=>`M0 0L26 -13V-4.7H${l}V4.7H26V13Z`;
 return `<g transform="translate(${x1+1} ${y1+3}) rotate(${a})"><path d="${d(L+20)}" fill="#000" opacity=".55" filter="url(#soft)"/></g><path transform="translate(${x1} ${y1}) rotate(${a})" d="${d(L)}" fill="#f00"/>`;
}
h+=[[1671,922,1761,925],[1657,981.5,1740,993.5],[1529,1154,1617,1184.5],[1395,1235,1500,1289],[1347.5,1253.5,1426,1296],[1059.5,1227,1105,1300]].map(a=>arrow(...a)).join('');
h+='<path d="M238 167h2M238 385h2M238 604h2M238 1478h2" stroke="#333" stroke-width="1.5"/>';
document.getElementById('ov').innerHTML=h;
</script>
</body>
</html>
